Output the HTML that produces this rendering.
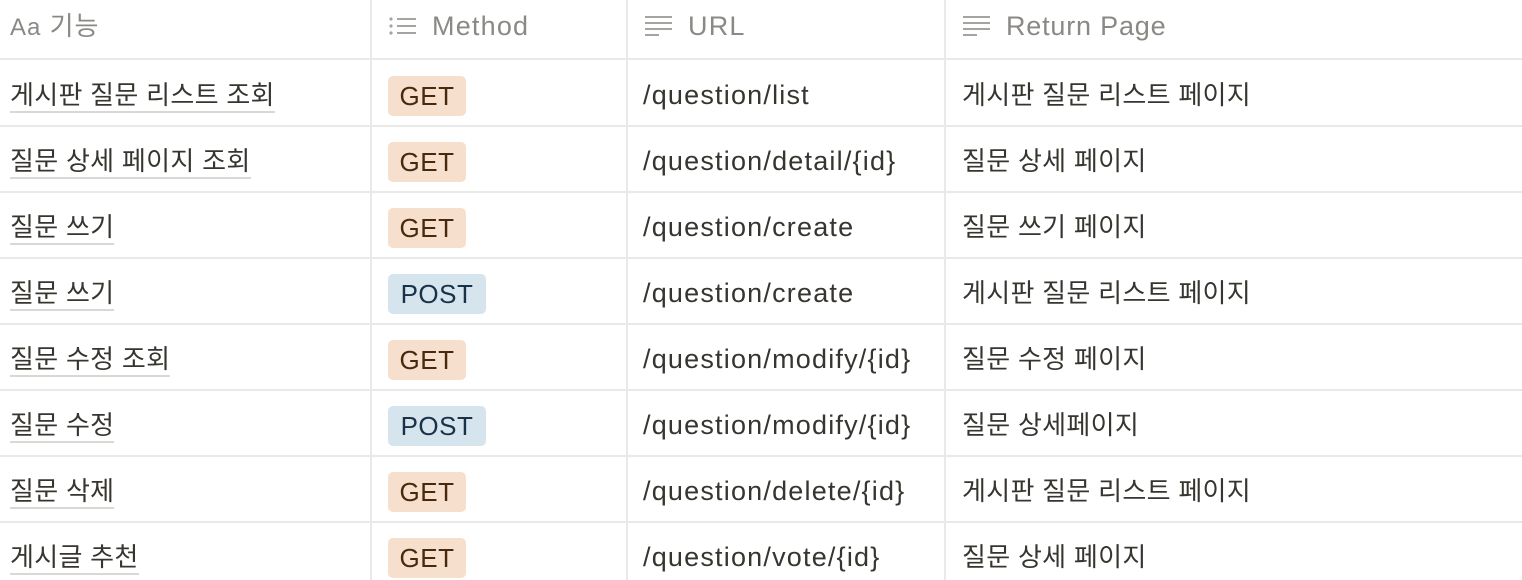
<!DOCTYPE html>
<html><head><meta charset="utf-8"><style>
body{margin:0;width:1522px;height:580px;overflow:hidden;background:#fff;font-family:"Liberation Sans","Noto Sans CJK KR",sans-serif;color:#37352f;position:relative}
.h{position:absolute;left:0;width:1522px;height:2px;background:#e9e9e7}
.v{position:absolute;top:0;width:2px;height:580px;background:#e9e9e7}
.t{position:absolute;font-size:26px;line-height:32px;white-space:nowrap;letter-spacing:0.3px}
.l{font-size:27px;letter-spacing:1.2px}
.hd{color:#8a8984;top:10px}
.u{border-bottom:2px solid #d9d8d5;padding-bottom:1px}
.b{position:absolute;left:388px;height:40px;border-radius:5px;font-size:26px;line-height:40px;text-align:center;letter-spacing:0.5px}
.g{background:#f6dfcd;color:#49290e;width:78px}
.p{background:#d6e4ee;color:#183347;width:98px}
</style></head><body>
<div class="v" style="left:370px"></div><div class="v" style="left:626px"></div><div class="v" style="left:944px"></div>
<div class="h" style="top:58px"></div><div class="h" style="top:125px"></div><div class="h" style="top:191px"></div><div class="h" style="top:257px"></div><div class="h" style="top:323px"></div><div class="h" style="top:389px"></div><div class="h" style="top:455px"></div><div class="h" style="top:521px"></div>
<div class="t hd" style="left:10px;letter-spacing:1px"><span style="font-size:24px">Aa</span> 기능</div>
<svg style="position:absolute;left:389px;top:16px" width="28" height="20"><g fill="#a5a4a0"><circle cx="2" cy="3" r="1.6"/><circle cx="2" cy="10" r="1.6"/><circle cx="2" cy="17" r="1.6"/><rect x="8" y="2" width="19" height="2"/><rect x="8" y="9" width="19" height="2"/><rect x="8" y="16" width="19" height="2"/></g></svg>
<div class="t hd l" style="left:432px">Method</div>
<svg style="position:absolute;left:645px;top:14px" width="30" height="24"><g fill="#a5a4a0"><rect x="0" y="2" width="27" height="2"/><rect x="0" y="8" width="27" height="2"/><rect x="0" y="14" width="27" height="2"/><rect x="0" y="20" width="14" height="2"/></g></svg>
<div class="t hd l" style="left:688px">URL</div>
<svg style="position:absolute;left:963px;top:14px" width="30" height="24"><g fill="#a5a4a0"><rect x="0" y="2" width="27" height="2"/><rect x="0" y="8" width="27" height="2"/><rect x="0" y="14" width="27" height="2"/><rect x="0" y="20" width="14" height="2"/></g></svg>
<div class="t hd l" style="left:1006px;letter-spacing:0.8px">Return Page</div>

<div class="t" style="left:10px;top:79px"><span class="u">게시판 질문 리스트 조회</span></div>
<div class="b g" style="top:76px">GET</div>
<div class="t l" style="left:643px;top:79px">/question/list</div>
<div class="t" style="left:962px;top:79px">게시판 질문 리스트 페이지</div>

<div class="t" style="left:10px;top:145px"><span class="u">질문 상세 페이지 조회</span></div>
<div class="b g" style="top:142px">GET</div>
<div class="t l" style="left:643px;top:145px">/question/detail/{id}</div>
<div class="t" style="left:962px;top:145px">질문 상세 페이지</div>

<div class="t" style="left:10px;top:211px"><span class="u">질문 쓰기</span></div>
<div class="b g" style="top:208px">GET</div>
<div class="t l" style="left:643px;top:211px">/question/create</div>
<div class="t" style="left:962px;top:211px">질문 쓰기 페이지</div>

<div class="t" style="left:10px;top:277px"><span class="u">질문 쓰기</span></div>
<div class="b p" style="top:274px">POST</div>
<div class="t l" style="left:643px;top:277px">/question/create</div>
<div class="t" style="left:962px;top:277px">게시판 질문 리스트 페이지</div>

<div class="t" style="left:10px;top:343px"><span class="u">질문 수정 조회</span></div>
<div class="b g" style="top:340px">GET</div>
<div class="t l" style="left:643px;top:343px">/question/modify/{id}</div>
<div class="t" style="left:962px;top:343px">질문 수정 페이지</div>

<div class="t" style="left:10px;top:409px"><span class="u">질문 수정</span></div>
<div class="b p" style="top:406px">POST</div>
<div class="t l" style="left:643px;top:409px">/question/modify/{id}</div>
<div class="t" style="left:962px;top:409px">질문 상세페이지</div>

<div class="t" style="left:10px;top:475px"><span class="u">질문 삭제</span></div>
<div class="b g" style="top:472px">GET</div>
<div class="t l" style="left:643px;top:475px">/question/delete/{id}</div>
<div class="t" style="left:962px;top:475px">게시판 질문 리스트 페이지</div>

<div class="t" style="left:10px;top:541px"><span class="u">게시글 추천</span></div>
<div class="b g" style="top:538px">GET</div>
<div class="t l" style="left:643px;top:541px">/question/vote/{id}</div>
<div class="t" style="left:962px;top:541px">질문 상세 페이지</div>
</body></html>
